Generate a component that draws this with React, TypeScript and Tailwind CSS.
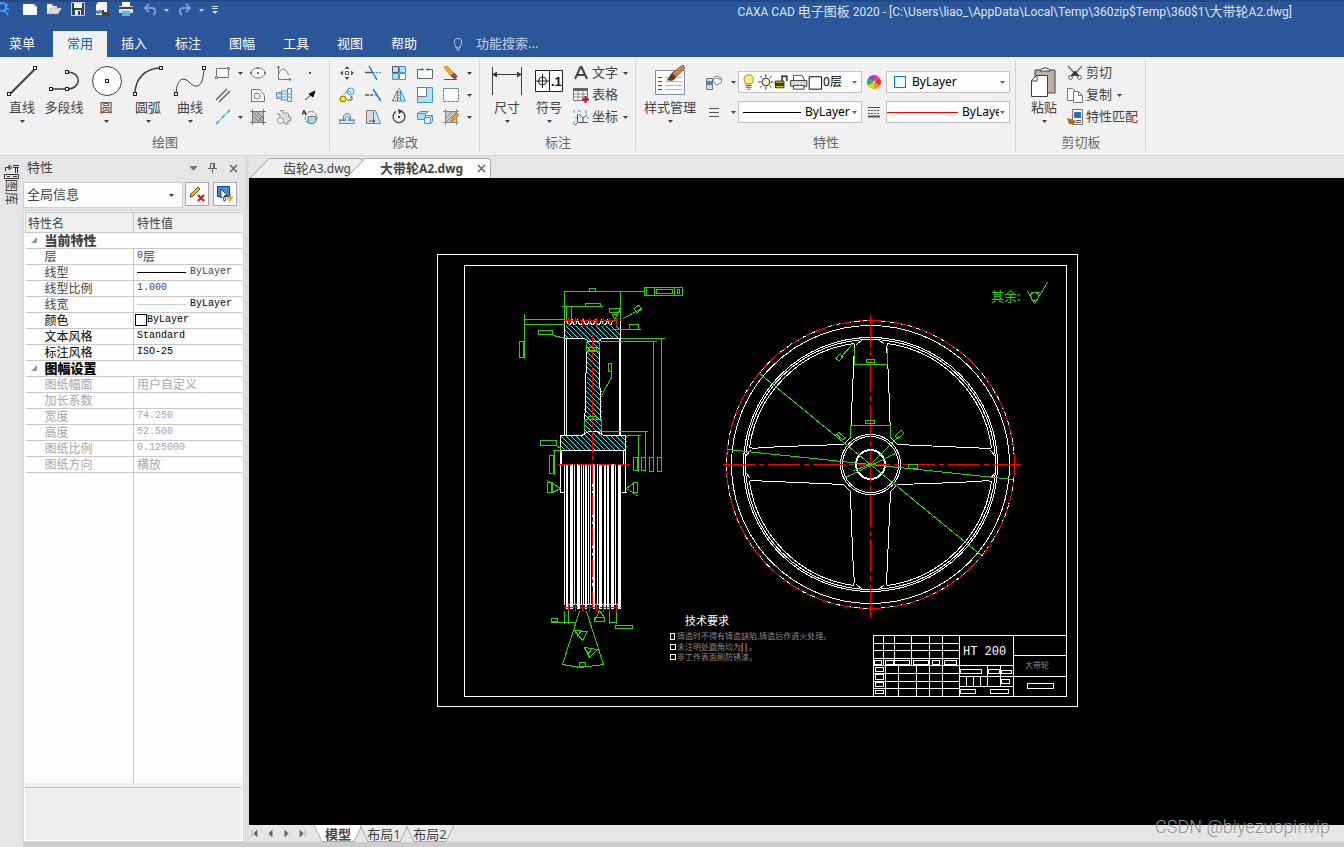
import { ReactNode } from "react";
import { clsx } from "clsx";

type Box = [number, number, number, number];

const MENU_TABS = ["常用", "插入", "标注", "图幅", "工具", "视图", "帮助"];

const GREEN = "#32cd0c";

const Caret = ({ className }: { className?: string }) => (
  <svg
    viewBox="0 0 5 3"
    className={clsx("h-[3px] w-[5px] shrink-0 fill-[#444]", className)}
  >
    <path d="M0 0h5L2.5 3z" />
  </svg>
);

const Icon = ({ children, label }: { children: ReactNode; label?: string }) => (
  <svg
    viewBox="0 0 16 16"
    className="h-4 w-4 shrink-0"
    fill="none"
    stroke="#555"
    aria-label={label}
  >
    {children}
  </svg>
);

const ICONS: Record<string, ReactNode> = {
  rect: (
    <>
      <path d="M1.5 3.5h12v9h-12z" fill="#fff" stroke="#777" />
      <path d="M.5 11.500h2v2h-2zM12.500 2.500h2v2h-2z" fill="#fff" stroke="#777" />
    </>
  ),
  parallel: <path d="M1 13 12 2M4 15 15 4" stroke="#666" strokeWidth="1.500" />,
  centerline: <path d="M1 15 15 1" stroke="#21a3dc" strokeDasharray="5 1 1 1" strokeWidth="1.4" />,
  ellipse: (
    <>
      <ellipse cx="8" cy="8" rx="7" ry="5" fill="#fff" stroke="#777" />
      <path d="M7 2h2v2H7zM0 7h2v2H0zM14 7h2v2h-2zM7 7h2v2H7z" fill="#777" stroke="none" />
    </>
  ),
  contour: (
    <>
      <path d="M1.5 14.5v-12h8l5 6v6z" fill="#fff" stroke="#777" />
      <circle cx="7" cy="9" r="3" stroke="#777" />
    </>
  ),
  hatch: (
    <>
      <path d="M2.5 2.5h11v11h-11z" fill="#bbb" stroke="#777" />
      <path d="m3 7 6 6M3 3l10 10M7 3l6 6M8 13l5-6M0 2.5h3M2.5 0v3M13 2.5h3M13.500 0v3M0 13.500h3M2.500 13v3M13 13.500h3M13.500 13v3" stroke="#777" />
    </>
  ),
  curve: <path d="M2.500 1v13.500H15M1 3l1.500-2L4 3M13 13l2 1.500-2 1.500M2.500 10c2-8 7-8 10 0" stroke="#777" />,
  shaft: (
    <>
      <path d="M.5 5.500h5v6h-5zM5.500 4h6v9h-6zM11.500 1.500h4v13h-4z" fill="#e6f2fb" stroke="#77889a" />
      <path d="M0 7h16M0 10h16" stroke="#5aa5dc" />
    </>
  ),
  gear: (
    <>
      <path d="M4 1.500h3v2l2 1 2-1 2 2-1 2 3 1v3l-3 .5v3h-3l-1-2" fill="#ddd" stroke="#888" />
      <circle cx="4.500" cy="11.500" r="3" fill="#fff" stroke="#888" />
      <path d="M1 5h3v3" stroke="#888" />
    </>
  ),
  point: <path d="M7 7h2v2H7z" fill="#555" stroke="none" />,
  arrow: (
    <>
      <path d="m3 13 6-5" stroke="#333" />
      <path d="m13 4-2 6-4-3z" fill="#111" stroke="#111" />
    </>
  ),
  partial: (
    <>
      <circle cx="9" cy="8.500" r="6" stroke="#777" strokeDasharray="3 1" />
      <path d="M6 7.500h8v5l-3 2H7l-1-2z" fill="#9fdcf7" stroke="#777" />
      <path d="m0 6 2-5 2 5M1 4h3" stroke="#222" />
    </>
  ),
  move: (
    <>
      <path d="M8 1l2.500 3h-5zM8 15l2.500-3h-5zM1 8l3-2.500v5zM15 8l-3-2.500v5z" fill="#555" stroke="none" />
      <path d="M6.500 6.500h3v3h-3z" fill="#fff" />
    </>
  ),
  trim: (
    <>
      <path d="M0 7.500h7" strokeWidth="1.500" />
      <path d="M8 7.500h8" stroke="#3e9be0" strokeDasharray="2 1" />
      <path d="m4 1 8 14" stroke="#2676c9" strokeWidth="1.500" />
    </>
  ),
  array: (
    <>
      <path d="M1.500 1.500h6v6h-6zM8.500 8.500h6v6h-6z" fill="#fff" stroke="#4393cf" />
      <path d="M8.500 1.500h6v6h-6zM1.500 8.500h6v6h-6z" fill="#ade2fa" stroke="#4393cf" />
      <path d="M1.500 1.500h6v6h-6z" fill="#ade2fa" stroke="#555" />
    </>
  ),
  breakAt: (
    <>
      <path d="M5 4.500H.5v9h15v-9H11" fill="#fff" stroke="#666" />
      <path d="M5 3v3M11 3v3M4 4.500h3M9 4.500h3" stroke="#2676c9" />
    </>
  ),
  pencil: (
    <>
      <path d="m1 2 3-1 7 7-3 3z" fill="#f9a825" stroke="#e08b00" />
      <path d="m8 11 3-3 3 3-2 3z" fill="#a0523d" stroke="#8d4a3a" />
      <path d="M1 14.500h13" />
    </>
  ),
  copyObj: (
    <>
      <circle cx="4" cy="12" r="3" fill="#f8ea00" stroke="#776c00" />
      <circle cx="11.500" cy="4.500" r="3.500" fill="#e0f1fd" stroke="#4393cf" />
      <path d="M6 7c0-3 5-4 6-1" stroke="#4393cf" />
      <path d="M8 13h5v-3M11 11l2-2" stroke="#b33" />
    </>
  ),
  extend: (
    <>
      <path d="M0 8h4M5 8h3" strokeWidth="1.500" />
      <path d="M9 8h3" stroke="#3e9be0" />
      <path d="m8 2 8 12" stroke="#2676c9" strokeWidth="1.500" />
    </>
  ),
  mirror: (
    <>
      <path d="M6.500 3v11h-5z" fill="#ddd" stroke="#777" />
      <path d="M9.500 3v11h5z" fill="#b9e3fa" stroke="#4393cf" />
      <path d="M8 1v15" stroke="#777" strokeDasharray="2 1" />
    </>
  ),
  scale: (
    <>
      <path d="M.5.5h15v15H.5z" fill="#ade2fa" stroke="#4393cf" />
      <path d="M.5.5h9v9h-9z" fill="#fff" stroke="#777" />
    </>
  ),
  stretchBox: (
    <>
      <path d="M.5 1.500h15v13H.5z" fill="#fff" stroke="#777" strokeDasharray="3 1" />
      <path d="M0 1.500h15" stroke="#4393cf" strokeDasharray="2 2" />
    </>
  ),
  offset: (
    <>
      <path d="M0 11h5c-3-8 9-9 6 0h5" stroke="#666" />
      <path d="M0 14.500h15.500c0-3-1-3-6-3 3-5-5-6-3 0H1z" fill="#d2ebfb" stroke="#4393cf" />
    </>
  ),
  stretch: (
    <>
      <path d="M1.500 1.500h7v13h-7z" fill="#ddd" stroke="#777" />
      <path d="M8.500 1.500h2l5 13h-7z" fill="#c4e9fb" stroke="#4393cf" />
      <path d="M4 12h6M8 10l2 2-2 2" />
    </>
  ),
  rotate: (
    <>
      <path d="M5 2.500a6 6 0 1 0 6 0" strokeWidth="1.500" />
      <path d="m7 0 5 2-4 3z" fill="#333" stroke="none" />
      <path d="M7 7h2v2H7z" fill="#333" stroke="none" />
    </>
  ),
  block: (
    <>
      <path d="M.5 4.500h8v6h-8zM.5 4.500l3-2h8l-3 2" fill="#ade2fa" stroke="#4393cf" />
      <path d="M7.500 8.500h6v6h-6zM7.500 8.500l2-2h6l-2 2M15.500 6.500v6l-2 2" fill="#dff1fc" stroke="#4393cf" />
    </>
  ),
  hatchEdit: (
    <>
      <path d="M2.500 2.500h11v11h-11z" fill="#c9c9c9" stroke="#666" />
      <path d="m3 9 6-6M3 13 13 3M8 13l5-5M0 2.500h16M0 13.500h16M2.500 0v16M13.500 0v16" stroke="#888" />
      <path d="m14 4-5 5-1 3 3-1 5-5z" fill="#f4a824" stroke="#b87500" />
    </>
  ),
  textA: <path d="M2 14 7.500 2h1L14 14M4 10h8" strokeWidth="2" stroke="#444" />,
  table: (
    <>
      <path d="M.5 1.500h14v12H.5z" fill="#fff" stroke="#777" />
      <path d="M0 1h15v3H0z" fill="#666" stroke="none" />
      <path d="M1 7h14M1 10h14M5 4v9M10 4v9" stroke="#888" />
      <path d="M12.500 9v7M9 12.500h7" stroke="#b5121b" strokeWidth="2" />
    </>
  ),
  coord: (
    <>
      <path d="M4.500 5v8.500H15M6 5l4 4v4M10 9l4-3M4 14l-2 2" stroke="#555" />
      <path d="M1 1v3M1 12v4M5 2h3M13 1v4M3 8v2M15 8v2" stroke="#3e9be0" />
    </>
  ),
  layers: (
    <>
      <path d="m6 5 4-3 6 2-1 5-5 2z" fill="#fff" stroke="#888" />
      <path d="m6 7 4-3 6 2" stroke="#888" />
      <path d="M.5 4.500h6v11h-6z" fill="#ddd" stroke="#777" />
      <path d="M1 7h5v4H1z" fill="#4f86bd" stroke="none" />
    </>
  ),
  widths: <path d="M3 4.500h10M3 8.500h10M3 12.500h10" />,
  linetypes: (
    <>
      <path d="M2 3.500h12" />
      <path d="M2 6.500h12M2 9.500h12" strokeDasharray="2 1" />
      <path d="M2 12.500h12" strokeWidth="2" />
    </>
  ),
  palette: (
    <g stroke="none">
      <path d="M8 8 8 1A7 7 0 0 1 14 4.500z" fill="#e8368f" />
      <path d="M8 8 14 4.500A7 7 0 0 1 14 11.500z" fill="#ee2a24" />
      <path d="M8 8 14 11.500A7 7 0 0 1 8 15z" fill="#f7941d" />
      <path d="M8 8 8 15A7 7 0 0 1 2 11.500z" fill="#d9d51c" />
      <path d="M8 8 2 11.500A7 7 0 0 1 2 4.500z" fill="#27b34b" />
      <path d="M8 8 2 4.500A7 7 0 0 1 8 1z" fill="#7a4fe0" />
      <circle cx="8" cy="8" r="1" fill="#fff" />
    </g>
  ),
  cut: (
    <>
      <path d="m1 1 9 10M15 1 6 11" stroke="#777" strokeWidth="1.500" />
      <circle cx="3.500" cy="12.500" r="2" stroke="#666" />
      <circle cx="12.500" cy="12.500" r="2" stroke="#666" />
      <path d="m4 11 4-5 4 5-4-1z" fill="#333" stroke="#333" />
    </>
  ),
  copy: (
    <>
      <path d="M.5 1.500h5l3 3v9h-8z" fill="#fff" stroke="#777" />
      <path d="M6.500 4.500h5l4 4v7h-9zM11.500 4.500v4h4" fill="#fff" stroke="#777" />
    </>
  ),
  match: (
    <>
      <path d="M5.500.5h10v15h-10z" fill="#fff" stroke="#777" />
      <path d="M7 3h7v6H7z" fill="#2f6fb5" stroke="none" />
      <path d="M9 11.500h5M9 13.500h5" />
      <path d="m0 9 4 1 5 2-2 3H2z" fill="#b5651d" stroke="none" />
    </>
  ),
};

const ToolIcon = ({ name, className }: { name: string; className?: string }) => (
  <button aria-label={name} className={clsx("flex h-[22px] items-center justify-center", className)}>
    <Icon>{ICONS[name]}</Icon>
  </button>
);

const BigTool = ({
  label,
  children,
  caret = true,
  className = "w-[42px]",
}: {
  label: string;
  children: ReactNode;
  caret?: boolean;
  className?: string;
}) => (
  <button className={clsx("flex flex-col items-center whitespace-nowrap pt-[3px]", className)}>
    <svg viewBox="0 0 32 32" className="h-8 w-8" fill="none" stroke="#3b3f47">
      {children}
    </svg>
    <span className="leading-5">{label}</span>
    {caret && <Caret className="mt-[3px]" />}
  </button>
);

const LabelTool = ({ icon, label, caret }: { icon: string; label: string; caret?: boolean }) => (
  <button className="flex h-[22px] items-center gap-[3px] whitespace-nowrap">
    <Icon>{ICONS[icon]}</Icon>
    <span>{label}</span>
    {caret && <Caret className="ml-0.5" />}
  </button>
);

const Panel = ({
  title,
  children,
  className,
}: {
  title: string;
  children: ReactNode;
  className?: string;
}) => (
  <section className="relative flex shrink-0 flex-col pt-[5px] after:absolute after:right-0 after:top-[3px] after:h-[91px] after:w-px after:bg-[#d4d4d4]">
    <div className={clsx("flex h-[66px]", className)}>{children}</div>
    <div className="h-[27px] text-center leading-7 text-[#666]">{title}</div>
  </section>
);

const Combo = ({
  label,
  value,
  children,
}: {
  label: string;
  value: string;
  children?: ReactNode;
}) => (
  <div className="flex h-[22px] w-[124px] items-center border border-[#c3c3c3] bg-[#fdfdfd] pl-1 pr-1">
    {children}
    <select
      aria-label={label}
      className="min-w-0 flex-1 appearance-none overflow-hidden bg-transparent text-[12px] text-black outline-none"
    >
      <option>{value}</option>
    </select>
    <Caret className="ml-px fill-[#666]" />
  </div>
);

const Handles = ({ at }: { at: [number, number][] }) => (
  <>
    {at.map(([x, y]) => (
      <rect key={`${x}-${y}`} x={x - 1.5} y={y - 1.5} width="3" height="3" fill="#fff" stroke="#222" />
    ))}
  </>
);

const TitleBar = () => (
  <header className="shrink-0 border-t-2 border-[#234a86] bg-[#2b579a] text-white">
    <div className="flex h-[29px] items-start">
      <svg viewBox="0 0 12 16" className="h-4 w-3" fill="none" stroke="#3aa0ff" strokeWidth="2">
        <circle cx="2" cy="5" r="4" />
        <path d="m4 8 4 5M6 2l2 2M6 7h3" />
      </svg>
      <div className="ml-2.5 flex gap-2">
        <button aria-label="新建">
          <svg viewBox="0 0 16 16" className="h-4 w-4">
            <path d="M1 2h11l3 3v8H1z" fill="#fff" />
            <path d="M12 2v3h3" fill="#ccc" />
          </svg>
        </button>
        <button aria-label="打开">
          <svg viewBox="0 0 16 16" className="h-4 w-4">
            <path d="M1 2h5l1 2h4v3H6l-3 5H1z" fill="#f4efe4" />
            <path d="M5 6h11l-4 6H2z" fill="#ddd" stroke="#888" strokeWidth=".5" />
          </svg>
        </button>
        <button aria-label="保存">
          <svg viewBox="0 0 16 16" className="h-4 w-4">
            <path d="M1.500.5h13v13h-13z" fill="#39414e" stroke="#c9ccd2" />
            <path d="M4 1h8v5H4zM5 8h6v5H5z" fill="#f2f2f2" />
            <path d="M8 9h2v4H8z" fill="#39414e" />
          </svg>
        </button>
        <button aria-label="另存为">
          <svg viewBox="0 0 16 16" className="h-4 w-4">
            <path d="M4 0h9v13H2V3z" fill="#f4f4f4" />
            <path d="m2 9 2 2 2-2 2 2" fill="none" stroke="#2676c9" strokeWidth="2" />
            <path d="M8 8h7v6H8z" fill="#444" />
            <path d="M10 8h3v2h-3z" fill="#fff" />
          </svg>
        </button>
        <button aria-label="打印">
          <svg viewBox="0 0 16 16" className="h-4 w-4">
            <path d="M4 0h8v4H4z" fill="#fff" />
            <path d="M1 4h14v7H1z" fill="#ddd" />
            <path d="M1 5h14v2H1z" fill="#444" />
            <path d="M4 9h8v5H4z" fill="#3ec1ea" />
          </svg>
        </button>
      </div>
      <div className="ml-2 flex items-start gap-2">
        {["撤销", "恢复"].map((label, i) => (
          <span key={label} className="flex items-center gap-1.5">
            <button aria-label={label}>
              <svg
                viewBox="0 0 16 16"
                className={clsx("h-4 w-4", i === 1 && "-scale-x-100")}
                fill="none"
                stroke="#7f9ac6"
                strokeWidth="2"
              >
                <path d="M3 6h7c4 0 4 5 1 7" />
                <path d="M7 2 3 6l4 4" />
              </svg>
            </button>
            <Caret className="fill-[#c5d0e2]" />
          </span>
        ))}
        <svg viewBox="0 0 6 8" className="mt-1 h-2 w-1.5" fill="#d5dceb">
          <path d="M0 0h6v1H0zM0 2h6v1H0zM0 5h6L3 8z" />
        </svg>
      </div>
      <h1 className="ml-auto whitespace-nowrap pr-[52px] font-['Roboto','Noto_Sans_CJK_SC',sans-serif] text-[12px] leading-5 text-[#dfe6f1]">
        CAXA CAD <span className="text-[13px]">电子图板</span> 2020 -
        [C:\Users\liao_\AppData\Local\Temp\360zip$Temp\360$1\<span className="text-[13px]">大带轮</span>
        A2.dwg]
      </h1>
    </div>
    <nav className="flex h-[26px] items-center">
      <button className="mr-[9px] w-11">菜单</button>
      {MENU_TABS.map((tab, i) => (
        <button
          key={tab}
          className={clsx("h-full w-[54px]", i === 0 && "bg-[#f1f1f1] text-[#0a62b8]")}
        >
          {tab}
        </button>
      ))}
      <label className="ml-[21px] flex items-center gap-3 text-[#c4d0e4]">
        <svg viewBox="0 0 12 14" className="h-3.5 w-3" fill="none" stroke="#c4d0e4">
          <path d="M4 9C1 6 2 1.500 6 1.500S11 6 8 9v2H4zM4.500 13h3" />
        </svg>
        <input
          aria-label="功能搜索"
          placeholder="功能搜索..."
          className="w-24 bg-transparent outline-none placeholder:text-[#c4d0e4]"
        />
      </label>
    </nav>
  </header>
);

const Ribbon = () => (
  <div className="flex h-[99px] shrink-0 overflow-hidden border-b border-[#d2d2d2] bg-[#f1f1f1] text-[#444]">
    <Panel title="绘图" className="pl-px pr-[7px]">
      <BigTool label="直线">
        <path d="M4 29 30 3" strokeWidth="2" />
        <Handles at={[[3, 29], [29, 3]]} />
      </BigTool>
      <BigTool label="多段线" caret={false}>
        <path d="M3 24h16c15 0 15-17 0-17" strokeWidth="1.500" />
        <Handles at={[[3, 24], [19, 24], [19, 7]]} />
      </BigTool>
      <BigTool label="圆">
        <circle cx="17" cy="16" r="14.500" fill="#fff" />
        <Handles at={[[17, 16]]} />
      </BigTool>
      <BigTool label="圆弧">
        <path d="M3 29C3 14 13 3 29 3" strokeWidth="1.500" />
        <Handles at={[[3, 29], [29, 3]]} />
      </BigTool>
      <BigTool label="曲线">
        <path d="M2 29C3 12 10 12 15 17s14 10 15-14" />
        <Handles at={[[2, 29], [30, 3]]} />
      </BigTool>
      <div className="grid grid-cols-[24px_10px_26px_26px_26px] items-center justify-items-center">
        <ToolIcon name="rect" />
        <Caret />
        <ToolIcon name="ellipse" />
        <ToolIcon name="curve" />
        <ToolIcon name="point" />
        <ToolIcon name="parallel" />
        <span />
        <ToolIcon name="contour" />
        <ToolIcon name="shaft" />
        <ToolIcon name="arrow" />
        <ToolIcon name="centerline" />
        <Caret />
        <ToolIcon name="hatch" />
        <ToolIcon name="gear" />
        <ToolIcon name="partial" />
      </div>
    </Panel>
    <Panel title="修改" className="pl-1 pr-1.5">
      <div className="grid grid-cols-[repeat(5,26px)_10px] items-center justify-items-center">
        {[
          ["move", "trim", "array", "breakAt", "pencil"],
          ["copyObj", "extend", "mirror", "scale", "stretchBox"],
          ["offset", "stretch", "rotate", "block", "hatchEdit"],
        ].map((row) => [
          ...row.map((name) => <ToolIcon key={name} name={name} />),
          <Caret key={`${row[0]}-more`} />,
        ])}
      </div>
    </Panel>
    <Panel title="标注" className="pl-1.5 pr-2">
      <BigTool label="尺寸">
        <path d="M1.500 2v28M30.500 2v28M2 9.500h28" />
        <path d="m1 9.500 5-3v6zM31 9.500l-5-3v6z" fill="#3b3f47" stroke="none" />
      </BigTool>
      <BigTool label="符号">
        <path d="M2.500 5.500h27v21h-27zM16.500 5.500v21" fill="#fff" stroke="#222" />
        <circle cx="9.500" cy="16" r="4" stroke="#222" />
        <path d="M9.500 9v14M3 16h13" stroke="#222" />
        <text x="18" y="21" fontSize="13" fontWeight="700" fill="#111" stroke="none" className="font-['Liberation_Sans',sans-serif]">
          .1
        </text>
      </BigTool>
      <div className="flex flex-col pl-[3px]">
        <LabelTool icon="textA" label="文字" caret />
        <LabelTool icon="table" label="表格" />
        <LabelTool icon="coord" label="坐标" caret />
      </div>
    </Panel>
    <Panel title="特性" className="pl-1 pr-1.5">
      <BigTool label="样式管理" className="w-[60px]">
        <path d="M1.500 5.500h29v24h-29z" fill="#fff" stroke="#7a8ea8" />
        <path d="M4 12.500h4M4 16.500h4M4 20.500h4M4 24.500h4" stroke="#33475e" />
        <path d="M11 12.500h17M11 16.500h17M11 20.500h17M11 24.500h17" stroke="#a9b8cc" />
        <path d="m29 0 2 3-9 9-4-4z" fill="#c98443" stroke="#6b3a12" strokeWidth=".7" />
        <path d="m18 8 4 4c-2 5-6 4-10 3 3 0 3-5 6-7z" fill="#6b3a12" stroke="none" />
      </BigTool>
      <div className="grid grid-cols-[28px_10px_124px_24px_124px] grid-rows-[30px_30px] items-center justify-items-center pt-[5px]">
        <ToolIcon name="layers" />
        <Caret />
        <Combo label="图层" value="0层">
          <svg viewBox="0 0 84 18" className="h-[18px] w-[80px] shrink-0" fill="none" stroke="#222">
            <path d="M3 11C-1 5 2 1.500 6 1.500S13 5 9 11z" fill="#ffe98a" stroke="#a47e10" />
            <path d="M3 12.500h6M3 14.500h6M4.500 16.500h3" stroke="#444" />
            <circle cx="24" cy="9" r="4" fill="#fff3bf" />
            <path d="M24 1v3M24 14v3M16 9h3M29 9h3M18 3l2 2M28 13l2 2M30 3l-2 2M20 13l-2 2" />
            <path d="M34 8h9v7h-9z" fill="#e5d900" />
            <path d="M34 10.500h9M34 12.500h9M41 8V3h5v5" strokeWidth="1.500" />
            <path d="M53 8V2h9l3 6" fill="#fff" stroke="#444" />
            <path d="M50 7.500h17v6H50z" fill="#ddd" stroke="#333" />
            <path d="M53 12.500h11v4H53z" fill="#fff" stroke="#333" />
            <path d="M69.500 3.500h13v13h-13z" fill="#fff" stroke="#000" />
          </svg>
        </Combo>
        <ToolIcon name="palette" />
        <Combo label="颜色" value="ByLayer">
          <span className="ml-[3px] mr-1.5 h-3 w-3 shrink-0 border border-[#0078d7]" />
        </Combo>
        <ToolIcon name="widths" />
        <Caret />
        <Combo label="线型" value="ByLayer">
          <span className="mr-1 h-px w-[58px] shrink-0 bg-black" />
        </Combo>
        <ToolIcon name="linetypes" />
        <Combo label="线宽" value="ByLayer">
          <span className="-ml-1 mr-1 h-px w-[71px] shrink-0 bg-[#f00]" />
        </Combo>
      </div>
    </Panel>
    <Panel title="剪切板" className="pl-[5px] pr-2">
      <BigTool label="粘贴" className="w-[46px]">
        <path d="M7 5h20v23H7z" fill="#beb2a8" stroke="#3b3f47" />
        <path d="M12 6c0-4 10-4 10 0z" fill="#fff" stroke="#3b3f47" />
        <path d="M8.500 10.500h11v21H3.500v-16z" fill="#fff" stroke="#3b3f47" />
        <path d="M9 11v5H4" />
      </BigTool>
      <div className="flex flex-col">
        <LabelTool icon="cut" label="剪切" />
        <LabelTool icon="copy" label="复制" caret />
        <LabelTool icon="match" label="特性匹配" />
      </div>
    </Panel>
  </div>
);

const Mono = ({ children }: { children: ReactNode }) => (
  <span className="font-['Liberation_Mono',monospace] text-[10px]">{children}</span>
);

const LineSample = ({ color }: { color: string }) => (
  <span className={clsx("mr-1 h-px w-[49px] shrink-0", color)} />
);

type Row = { name: string; value?: ReactNode; tone?: string; group?: boolean };

const ROWS: Row[] = [
  { name: "当前特性", group: true },
  { name: "层", value: <><Mono>0</Mono>层</> },
  { name: "线型", value: <><LineSample color="bg-black" /><Mono>ByLayer</Mono></> },
  { name: "线型比例", value: <Mono>1.000</Mono> },
  {
    name: "线宽",
    value: (
      <>
        <LineSample color="bg-[#ccc]" />
        <span className="flex text-black">
          <Mono>ByLayer</Mono>
        </span>
      </>
    ),
  },
  {
    name: "颜色",
    tone: "text-black",
    value: (
      <>
        <span className="-ml-0.5 h-3 w-3 border border-black" />
        <Mono>ByLayer</Mono>
      </>
    ),
  },
  { name: "文本风格", value: <Mono>Standard</Mono>, tone: "text-black" },
  { name: "标注风格", value: <Mono>ISO-25</Mono>, tone: "text-black" },
  { name: "图幅设置", group: true, tone: "text-black" },
  { name: "图纸幅面", value: "用户自定义", tone: "text-[#a9a9a9]" },
  { name: "加长系数", tone: "text-[#a9a9a9]" },
  { name: "宽度", value: <Mono>74.250</Mono>, tone: "text-[#a9a9a9]" },
  { name: "高度", value: <Mono>52.500</Mono>, tone: "text-[#a9a9a9]" },
  { name: "图纸比例", value: <Mono>0.125000</Mono>, tone: "text-[#a9a9a9]" },
  { name: "图纸方向", value: "横放", tone: "text-[#a9a9a9]" },
];

const PropertyPanel = () => (
  <aside className="flex w-[221px] shrink-0 flex-col">
    <div className="flex h-[26px] items-center pb-0.5 pl-1 pr-1.5 text-[#444]">
      <h2 className="flex-1 text-[13px]">特性</h2>
      <div className="flex items-center gap-2.5">
        <Caret className="h-[5px] w-[9px] fill-[#777]" />
        <svg viewBox="0 0 9 10" className="h-2.5 w-[9px]" fill="none" stroke="#666">
          <path d="M2.500 0v5.500M6.500 0v5.500M2 .5h5M5.500 1v4M0 5.500h9M4.500 6v4" />
        </svg>
        <button aria-label="关闭">
          <svg viewBox="0 0 9 9" className="ml-0.5 h-[9px] w-[9px]" stroke="#666" strokeWidth="1.500">
            <path d="m1 1 7 7M8 1 1 8" />
          </svg>
        </button>
      </div>
    </div>
    <div className="flex items-start gap-1 pb-0.5">
      <div className="flex h-[26px] w-[160px] items-center border border-[#cfcfcf] bg-[#fdfdfd] pl-[3px] pr-2">
        <select
          aria-label="选择对象"
          className="flex-1 appearance-none bg-transparent text-[13px] text-[#444] outline-none"
        >
          <option>全局信息</option>
        </select>
        <Caret />
      </div>
      <button aria-label="清除" className="-ml-0.5 flex h-6 w-6 items-center justify-center border border-[#aaa] bg-[#fafafa]">
        <svg viewBox="0 0 16 16" className="h-4 w-4" fill="none">
          <path d="m1 11 1-3 7-7 2 2-7 7z" fill="#f3b93c" stroke="#6d4a10" />
          <path d="m9 9 6 6M15 9l-6 6" stroke="#c8141e" strokeWidth="2" />
        </svg>
      </button>
      <button aria-label="快速选择" className="mr-1 flex h-6 w-6 items-center justify-center border border-[#aaa] bg-[#fafafa]">
        <svg viewBox="0 0 16 16" className="h-4 w-4">
          <path d="M.5.5h12v10H.5z" fill="#3b8ede" stroke="#123c78" />
          <path d="m4 3 6 6-3 1 2 4-2 1-1-4-2 1z" fill="#fff" stroke="#222" strokeWidth=".8" />
          <path d="m14 8-4 5h3l-1 3 4-5h-3z" fill="#ffb100" stroke="#c77a00" strokeWidth=".5" />
        </svg>
      </button>
    </div>
    <div className="flex flex-1 flex-col border border-[#d5d5d5] bg-[#fdfdfd] p-px text-[12px] text-[#444]">
      <table className="w-full table-fixed border-collapse font-['Noto_Sans_CJK_SC',sans-serif]">
        <colgroup>
          <col className="w-[108px]" />
          <col />
        </colgroup>
        <thead>
          <tr className="h-5 bg-[#f1f1f1] text-left">
            <th className="border border-[#c9c9c9] pl-0.5 font-normal leading-[18px]">特性名</th>
            <th className="border border-r-0 border-[#c9c9c9] pl-[3px] font-normal leading-[18px]">特性值</th>
          </tr>
        </thead>
        <tbody>
          {ROWS.map((row) =>
            row.group ? (
              <tr key={row.name} className="h-4 border-b border-[#c9c9c9]">
                <th colSpan={2} className={clsx("text-left align-top font-black leading-[14px]", row.tone)}>
                  <span className="flex items-center pl-[5px]">
                    <svg viewBox="0 0 6 6" className="mr-2 h-1.5 w-1.5 fill-[#999]">
                      <path d="M6 0v6H0z" />
                    </svg>
                    <span className="text-[13px]">{row.name}</span>
                  </span>
                </th>
              </tr>
            ) : (
              <tr key={row.name} className={clsx("h-4 border-b border-[#c9c9c9] align-top leading-[14px]", row.tone)}>
                <td className="whitespace-nowrap border-r border-[#c9c9c9] pl-[19px]">{row.name}</td>
                <td className="overflow-hidden whitespace-nowrap pl-[3px]">
                  <span className="flex items-center">{row.value}</span>
                </td>
              </tr>
            )
          )}
        </tbody>
      </table>
      <div className="w-[109px] flex-1 border-r border-[#c9c9c9]" />
      <div className="border-b border-[#c3c3c3] bg-[#efefef] pt-1" />
      <div className="h-[52px] bg-[#efefef]" />
    </div>
  </aside>
);

const Rects = ({ boxes }: { boxes: Box[] }) => (
  <>
    {boxes.map(([x, y, w, h]) => (
      <rect key={`${x}-${y}`} x={x} y={y} width={w} height={h} />
    ))}
  </>
);

// [x, width] of the visible belt grooves below the axis
const GROOVES: [number, number][] = [
  [564, 1], [566, 2], [570, 3], [574, 1], [577, 3], [581, 1], [583, 1], [585, 2], [588, 1],
  [590, 1], [593, 2], [597, 1], [599, 3], [604, 2], [607, 2], [611, 3], [615, 1], [618, 3],
];

const TEETH = [568, 575, 582, 589, 596, 603, 609, 616];

const SideView = () => (
  <g>
    <path
      d="M564 325h56v13h-17l-4 3v46l2 4v40l2 4h23v15h-66v-15h22l2-4v-22l2-20v-48l-3-3h-19z"
      fill="url(#hatch)"
      stroke="none"
    />
    <g stroke="#fff">
      <path d="M564 319v116M566 338v97M619 338v97M620 319v116M564 338h20l3 2v1h11l3-3h19" />
      <path d="M586 341v22l-1 20v20l-1 20v10M599 341v46l1 1v29l1 5v11" />
      <path d="M560 492v-57h21l4-2 3-2h9l4 3 3 1h21v57M560 450h65M561 450v14M623 450v14M560 492h4M621 492h5" />
      <path d="m564 320 2 0 2 4h2l2-4 1 4h2l2-4 2 4h2l2-4 2 4h2l2-4 2 4h2l2-4 2 4h2l2-4 2 4h2l2-4 2 4h2l1-4" />
    </g>
    <g fill="#fff" stroke="none" transform="translate(-.5 -.5)">
      {GROOVES.map(([x, w]) => (
        <rect key={x} x={x} y="464" width={w} height={w > 1 ? 145 : 141} />
      ))}
      <path d="M566 604h52v1h-52z" />
    </g>
    <g stroke="#f00">
      <path d="M592 334v272" strokeDasharray="22 3 4 3" />
      <path d="M557 464h72M563 320h60M563 607h60" strokeDasharray="14 2 2 2" />
      {TEETH.map((x) => (
        <path key={x} d={`M${x} 317v8M${x} 602v9`} />
      ))}
    </g>
    <path d="M592 483v3M592 490v2M592 514v2M592 521v2M592 545v2M592 552v2M592 576v2M592 582v3" stroke="#fff" />
    <g stroke={GREEN}>
      <path d="M564 290v29M620 290v29M564 291h80M561 306h41M566 305v14M571 305v14M611 314h6M612 314l2 5 6-11M623 318l18-10M611 329h29" />
      <path d="M524 313v45M523 319h41M523 324h41M553 335l12 3" />
      <path d="M620 338h44M661 338v133M600 341h56M653 341v130M597 431h50M645 431v40M626 435h14M638 435v36" />
      <path d="M611 362v15l-10 18M586 341v10h13v-10M584 431v-12h17v12" />
      <path d="M557 446l4 2M554 474v-24M552 450h8M547 480l13 8-8 4M638 496l-12-8 8-6" />
      <path d="M564 610v13M568 610v13M550 622h25M579 611l-17 53 18 3 23-3-17-53M574 630l13 1-5 9zM576 637l5-7M584 647l13 2-8 8zM586 655l6-7" />
      <path d="M594 621l5-11 5 7M609 611v12M616 611v12M609 622h7" />
      <rect x="634" y="306" width="6" height="5" transform="rotate(-35 637 308)" />
      <Rects
        boxes={[
          [589, 288, 6, 3], [644, 287, 38, 8], [646, 287, 8, 8], [656, 289, 16, 4], [674, 287, 8, 8],
          [677, 289, 2, 4], [585, 303, 15, 3], [609, 308, 10, 4], [629, 324, 9, 5], [519, 341, 4, 16],
          [538, 330, 14, 4], [608, 363, 3, 8], [588, 347, 8, 3], [588, 416, 8, 3], [540, 440, 16, 5],
          [549, 455, 4, 18], [633, 457, 4, 13], [641, 457, 4, 13], [649, 457, 4, 14], [657, 457, 4, 14],
          [547, 482, 4, 10], [551, 482, 1, 10], [633, 482, 4, 10], [551, 618, 6, 3], [594, 617, 10, 4],
          [579, 662, 6, 4], [615, 625, 17, 3],
        ]}
      />
    </g>
  </g>
);

const Wheel = () => (
  <g>
    <g transform="translate(870 464)">
      <g stroke="#fff">
        {[144, 139, 127, 125, 30, 28].map((r) => (
          <circle key={r} r={r} />
        ))}
        <circle r="14.500" strokeWidth="2" />
        {[0, 90, 180, 270].map((angle) => (
          <g key={angle} transform={`rotate(${angle})`}>
            <path d="M16-116 17-121A122 122 0 0 1 121-17L120-16 27-20 20-27 19-60 17-108z" />
            <path d="M14-120 8-125M-14-120l6-5" />
          </g>
        ))}
      </g>
      <circle r="144" stroke="#f00" strokeDasharray="14 4 5 4" />
      <path d="M0-150V152M-148 0H150" stroke="#f00" strokeDasharray="32 4 5 4" />
    </g>
    <g stroke={GREEN}>
      <path d="M759 373 981 555M727 449l286 30M845 477l50-24M870 464l28-28M852 344l-12 13" />
      <path d="M854 347v17h33v-17M850 436v-11h40v11M853 470l17-6" />
      <Rects boxes={[[866, 359, 8, 3], [865, 420, 9, 3], [908, 464, 9, 4]]} />
      <rect x="836" y="434" width="8" height="3" transform="rotate(40 840 436)" />
      <rect x="895" y="432" width="8" height="4" transform="rotate(-45 899 434)" />
      <rect x="836" y="355" width="6" height="4" transform="rotate(-50 839 357)" />
      <path d="m1027 291 7 12 13-21M1030 292h9" />
      <circle cx="1034" cy="296" r="4" />
    </g>
  </g>
);

const TitleBlock = () => (
  <g stroke="#fff">
    <path d="M873 696v-61h193M959 635v61M1013 635v61" />
    <path d="M873 643h86M873 650h86M873 658h86M873 665h140M873 673h86M873 681h86M873 688h86" />
    <path d="M883 635v30M894 635v30M911 635v30M929 635v61M942 635v61M885 665v31M898 665v31M916 665v31" />
    <path d="M959 676h54M959 686h54M987 665v21M1000 665v21M966 676v10M973 676v10M980 676v10M1013 655h53M1013 676h53" />
    <Rects
      boxes={[
        [874, 660, 7, 4], [885, 660, 8, 4], [894, 660, 15, 4], [913, 660, 15, 4], [932, 660, 7, 4],
        [944, 660, 12, 4], [875, 667, 8, 4], [875, 674, 8, 5], [875, 682, 8, 4], [875, 690, 8, 3],
        [960, 669, 21, 4], [988, 669, 11, 4], [1001, 670, 10, 3], [1001, 679, 8, 4], [960, 689, 15, 4],
        [990, 689, 18, 4], [1027, 683, 26, 5],
      ]}
    />
  </g>
);

const Drawing = () => (
  <svg
    viewBox="249 178 1095 647"
    className="block h-full w-full"
    fill="none"
    shapeRendering="crispEdges"
  >
    <defs>
      <pattern
        id="hatch"
        width="5"
        height="5"
        patternUnits="userSpaceOnUse"
        patternTransform="translate(-.5 -.5)"
      >
        <path d="M0 0h1v1H0zM1 1h1v1H1zM2 2h1v1H2zM3 3h1v1H3zM4 4h1v1H4z" fill="#0ff" />
      </pattern>
    </defs>
    <g transform="translate(.5 .5)">
      <g stroke="#fff">
        <Rects boxes={[[437, 254, 640, 452], [464, 265, 602, 431]]} />
        <Rects boxes={[[670, 633, 4, 6], [670, 644, 5, 5], [670, 654, 5, 5]]} />
      </g>
      <SideView />
      <Wheel />
      <TitleBlock />
    </g>
    <g className="font-['Noto_Sans_CJK_SC',sans-serif]" fill="#8c8c8c" fontSize="8">
      <text x="991" y="301" fontSize="13" fill={GREEN}>其余:</text>
      <text x="685" y="625" fontSize="11" fill="#fff">技术要求</text>
      <text x="677" y="639">铸造时不得有铸造缺陷,铸造后作退火处理。</text>
      <text x="677" y="650">
        未注明处圆角均为<tspan fill="#fff">| |</tspan> 。
      </text>
      <text x="677" y="660">非工作表面刷防锈漆。</text>
      <text x="1025" y="668">大带轮</text>
      <text x="963" y="655" fontSize="12" fill="#fff" className="font-['Liberation_Mono',monospace]">
        HT 200
      </text>
    </g>
  </svg>
);

const DocTabs = () => (
  <div className="flex h-[22px] items-end text-[13px] text-[#444]">
    <button className="flex h-5 items-stretch">
      <svg viewBox="0 0 20 20" className="h-5 w-5">
        <path d="M1 20 20 .5V20z" fill="#efefef" />
        <path d="M1 20 20 .5" fill="none" stroke="#999" />
      </svg>
      <span className="w-[94px] whitespace-nowrap rounded-tr border-r border-t border-[#aaa] bg-[#efefef] pl-3.5 text-left leading-[18px]">
        齿轮<span className="text-[12px]">A3.dwg</span>
      </span>
    </button>
    <div className="relative -ml-[18px] flex h-5 items-stretch">
      <svg viewBox="0 0 20 20" className="h-5 w-5">
        <path d="M1 20 20 .5V20z" fill="#fdfdfd" />
        <path d="M1 20 20 .5" fill="none" stroke="#999" />
      </svg>
      <span className="flex items-center rounded-tr border-r border-t border-[#aaa] bg-[#fdfdfd] pl-[15px] pr-1">
        <button className="whitespace-nowrap font-bold leading-[18px]">
          大带轮<span className="text-[12px]">A2.dwg</span>
        </button>
        <button aria-label="关闭文件" className="ml-3.5">
          <svg viewBox="0 0 9 9" className="h-[9px] w-[9px]" stroke="#666" strokeWidth="1.500">
            <path d="m1 1 7 7M8 1 1 8" />
          </svg>
        </button>
      </span>
    </div>
  </div>
);

const LAYOUTS = ["模型", "布局1", "布局2"];

const LayoutTabs = () => (
  <div className="flex h-[17px] items-center text-[#444]">
    <div className="flex w-[65px] gap-[9px] pl-0.5">
      {["M1 0v8M7 0v8L3 4z", "M6 0v8L2 4z", "M2 0v8l4-4z", "M1 0v8l4-4zM7 0v8"].map((d) => (
        <button key={d} aria-label="切换布局">
          <svg viewBox="0 0 8 8" className="h-[7px] w-[7px]" fill="#666" stroke="#666" strokeWidth=".5">
            <path d={d} />
          </svg>
        </button>
      ))}
    </div>
    {LAYOUTS.map((name, i) => (
      <button
        key={name}
        className={clsx(
          "relative -mr-0.5 flex h-[17px] w-12 items-center justify-center whitespace-nowrap text-[13px]",
          i === 0 && "font-bold"
        )}
      >
        <svg viewBox="0 0 48 17" className="absolute inset-0 h-full w-full" preserveAspectRatio="none">
          <path d="M0 0 8 16.500H40L48 0" fill={i === 0 ? "#fff" : "#ececec"} stroke="#aaa" />
        </svg>
        <span className="relative leading-4">{name}</span>
      </button>
    ))}
  </div>
);

export default function App() {
  return (
    <div className="relative flex h-screen flex-col overflow-hidden bg-[#e6e6e6] font-['Noto_Sans','Noto_Sans_CJK_SC',sans-serif] text-[13px]">
      <TitleBar />
      <Ribbon />
      <div className="flex min-h-0 flex-1">
        <div className="flex w-[23px] shrink-0 flex-col items-center pt-[7px] text-[#444]">
          <svg viewBox="0 0 16 16" className="h-4 w-4" fill="none" stroke="#333">
            <path d="M1.500 8V4.500H6M5 2l3 2.500L5 7zM9 2.500h6M9 4.500h6M11.500 5v5M13.500 5v5M.5 11.500h14v4H.5zM3 13.500h3M9 13.500h4" />
          </svg>
          <button className="text-[13px] leading-4 [text-orientation:sideways] [writing-mode:vertical-rl]">
            图库
          </button>
        </div>
        <div className="flex min-w-0 flex-1 flex-col">
          <div className="flex min-h-0 flex-1">
            <PropertyPanel />
            <div className="w-[5px] shrink-0 border-l border-[#e6e6e6] bg-[#dcdcdc]" />
            <main className="flex min-w-0 flex-1 flex-col">
              <DocTabs />
              <div className="min-h-0 flex-1 bg-black">
                <Drawing />
              </div>
              <LayoutTabs />
            </main>
          </div>
          <div className="h-[5px] shrink-0 bg-[#cdcdcd]" />
        </div>
      </div>
      <div className="pointer-events-none absolute bottom-2 right-3.5 font-['Roboto',sans-serif] text-[18px] font-light leading-6 text-[#959595]">
        CSDN @biyezuopinvip
      </div>
    </div>
  );
}
